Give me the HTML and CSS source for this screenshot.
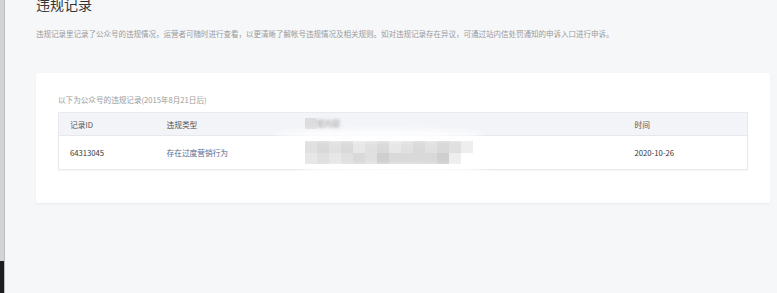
FILE: index.html
```html
<!DOCTYPE html>
<html lang="zh-CN">
<head>
  <meta charset="UTF-8">
  <meta name="viewport" content="width=device-width, initial-scale=1.0">
  <title>违规记录</title>
  <link rel="stylesheet" href="styles.css">
</head>
<body>
  <div class="side-strip"></div>

  <div class="main">
    <h2 class="page-title">违规记录</h2>
    <p class="page-desc">违规记录里记录了公众号的违规情况，运营者可随时进行查看，以更清晰了解帐号违规情况及相关规则。如对违规记录存在异议，可通过站内信处罚通知的申诉入口进行申诉。</p>

    <div class="card">
      <div class="caption">以下为公众号的违规记录(2015年8月21日后)</div>

      <div class="table-wrap">
        <table class="record-table">
          <colgroup>
            <col class="col-id">
            <col class="col-type">
            <col class="col-content">
            <col class="col-time">
          </colgroup>
          <thead>
            <tr>
              <th>记录ID</th>
              <th>违规类型</th>
              <th>
                <span class="head-blur"><span class="hb1"></span><span class="hb2">规内容</span></span>
              </th>
              <th>时间</th>
            </tr>
          </thead>
          <tbody>
            <tr>
              <td>64313045</td>
              <td><a class="type-link" href="#">存在过度营销行为</a></td>
              <td>
                <!-- pixelated (mosaic) content -->
                <div class="mosaic">
                  <span class="s3"></span><span class="s2"></span><span class="s3"></span><span class="s2"></span><span class="s4"></span><span class="s3"></span><span class="s2"></span><span class="s4"></span><span class="s3"></span><span class="s2"></span><span class="s3"></span><span class="s2"></span><span class="s3"></span><span class="s5"></span>
                  <span class="s4"></span><span class="s3"></span><span class="s4"></span><span class="s3"></span><span class="s2"></span><span class="s3"></span><span class="s1"></span><span class="s2"></span><span class="s2"></span><span class="s2"></span><span class="s2"></span><span class="s1"></span><span class="s5"></span><span class="s0"></span>
                </div>
              </td>
              <td>2020-10-26</td>
            </tr>
          </tbody>
        </table>
        <div class="smear smear-top"></div>
        <div class="smear smear-bottom"></div>
      </div>
    </div>
  </div>
</body>
</html>
```

FILE: styles.css
```css
body {
  margin: 0;
  height: 293px;
  overflow: hidden;
  display: flex;
  font-family: "Noto Sans CJK SC", "Noto Sans", sans-serif;
  background-color: #f6f7f9;
}
.side-strip {
  width: 4px;
  flex: none;
  border-right: 1px solid #bcbcbc;
  background: linear-gradient(to bottom, #d3d3d3 0, #d3d3d3 261px, #1e1e1e 261px);
}
.main {
  flex: 1;
  padding: 0 8px 0 31px;
}
.page-title {
  margin: -3px 0 0;
  font-size: 14px;
  line-height: 14px;
  font-weight: normal;
  color: #353535;
}
.page-desc {
  margin: 17px 0 0;
  font-size: 7.5px;
  line-height: 12px;
  color: #9a9a9a;
}
.card {
  margin-top: 33px;
  background-color: #fff;
  border-radius: 2px;
  box-shadow: 0 1px 2px rgba(0, 0, 0, 0.06);
  padding: 21px 22px 33px;
}
.caption {
  font-size: 7.6px;
  line-height: 12px;
  color: #9a9a9a;
}
.table-wrap {
  position: relative;
  margin-top: 6px;
}
.record-table {
  width: 100%;
  border-collapse: collapse;
  table-layout: fixed;
  border: 1px solid #e9eaee;
  box-shadow: 0 1px 1px rgba(0, 0, 0, 0.03);
  font-size: 7.7px;
}
.col-id { width: 97px; }
.col-type { width: 138px; }
.col-content { width: 330px; }
.col-time { width: 124px; }
th {
  height: 22px;
  padding: 0 0 0 11px;
  text-align: left;
  font-weight: normal;
  color: #555;
  background-color: #f3f4f8;
  border-bottom: 1px solid #e7e8ec;
}
td {
  height: 33px;
  padding: 0 0 0 11px;
  color: #353535;
}
.type-link {
  color: #576b95;
  text-decoration: none;
}
.head-blur {
  display: inline-flex;
  align-items: center;
  height: 11px;
}
.hb1 {
  width: 12px;
  height: 11px;
  background-color: #dcdcde;
}
.hb2 {
  width: 24px;
  height: 11px;
  line-height: 11px;
  overflow: hidden;
  color: #a8a8ac;
  background-color: #ececef;
  filter: blur(0.8px);
}
.mosaic {
  display: grid;
  grid-template-columns: repeat(14, 12px);
  grid-auto-rows: 11.5px;
}
.s0 { background-color: #fff; }
.s1 { background-color: #cfcfcf; }
.s2 { background-color: #d9d9d9; }
.s3 { background-color: #e0e0e0; }
.s4 { background-color: #e7e7e7; }
.s5 { background-color: #eeeeef; }
.smear {
  position: absolute;
  background-color: #fff;
  border-radius: 50%;
  filter: blur(3px);
  opacity: 0.9;
}
.smear-top {
  left: 215px;
  top: 18px;
  width: 210px;
  height: 10px;
}
.smear-bottom {
  left: 240px;
  top: 54px;
  width: 190px;
  height: 10px;
}
```
